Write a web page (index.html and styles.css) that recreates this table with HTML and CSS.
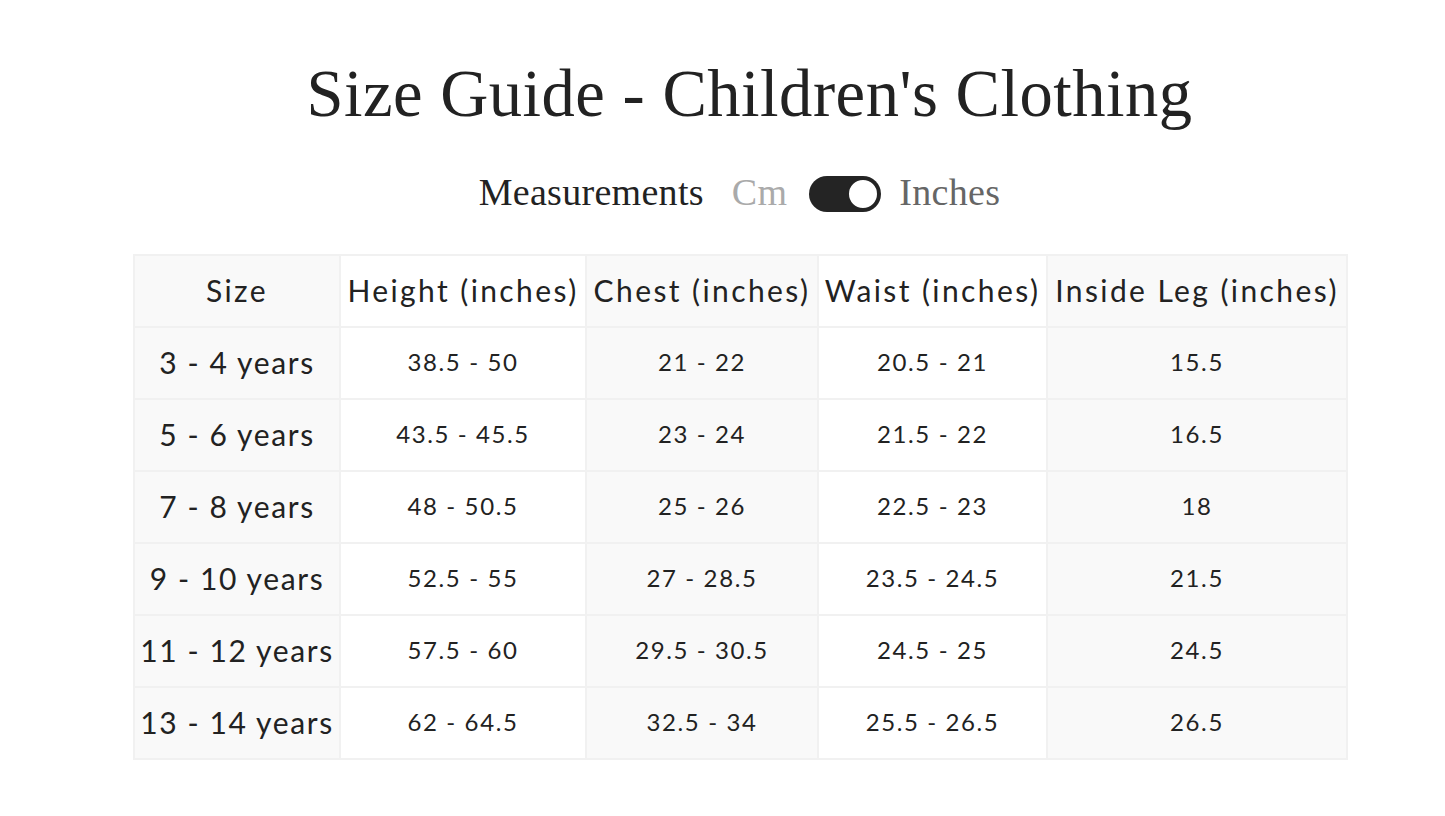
FILE: index.html
```html
<!DOCTYPE html>
<html lang="en">
<head>
<meta charset="utf-8">
<title>Size Guide - Children's Clothing</title>
<link rel="stylesheet" href="styles.css">
</head>
<body>
<main class="page">
  <h1 class="title">Size Guide - Children's Clothing</h1>
  <div class="units">
    <span class="units-label">Measurements</span>
    <span class="unit unit-off">Cm</span>
    <span class="toggle" role="switch" aria-checked="true"><span class="knob"></span></span>
    <span class="unit unit-on">Inches</span>
  </div>
  <table class="sizes">
    <colgroup>
      <col class="c1"><col class="c2"><col class="c3"><col class="c4"><col class="c5">
    </colgroup>
    <thead>
      <tr>
        <th>Size</th>
        <th>Height (inches)</th>
        <th>Chest (inches)</th>
        <th>Waist (inches)</th>
        <th>Inside Leg (inches)</th>
      </tr>
    </thead>
    <tbody>
      <tr><th>3 - 4 years</th><td>38.5 - 50</td><td>21 - 22</td><td>20.5 - 21</td><td>15.5</td></tr>
      <tr><th>5 - 6 years</th><td>43.5 - 45.5</td><td>23 - 24</td><td>21.5 - 22</td><td>16.5</td></tr>
      <tr><th>7 - 8 years</th><td>48 - 50.5</td><td>25 - 26</td><td>22.5 - 23</td><td>18</td></tr>
      <tr><th>9 - 10 years</th><td>52.5 - 55</td><td>27 - 28.5</td><td>23.5 - 24.5</td><td>21.5</td></tr>
      <tr><th>11 - 12 years</th><td>57.5 - 60</td><td>29.5 - 30.5</td><td>24.5 - 25</td><td>24.5</td></tr>
      <tr><th>13 - 14 years</th><td>62 - 64.5</td><td>32.5 - 34</td><td>25.5 - 26.5</td><td>26.5</td></tr>
    </tbody>
  </table>
  <p class="note">All measurements are approximate and taken from the garment laid flat. If your child is between sizes, we recommend sizing up.</p>
</main>
</body>
</html>
```

FILE: styles.css
```css
html, body {
  margin: 0;
  padding: 0;
  background: #ffffff;
}

.page {
  padding: 0 99px 0 133px;
  display: flex;
  flex-direction: column;
  align-items: stretch;
}

.title {
  margin: 52px 0 0;
  padding-left: 20px;
  font-family: "Liberation Serif", "Times New Roman", serif;
  font-weight: 400;
  font-size: 66.6px;
  line-height: 84px;
  text-align: center;
  color: #222222;
  letter-spacing: 0.5px;
}

.units {
  display: flex;
  justify-content: center;
  align-items: center;
  margin-top: 36px;
  height: 40px;
  font-family: "Liberation Serif", "Times New Roman", serif;
  font-size: 38px;
  letter-spacing: 0.3px;
}

.units-label {
  color: #222222;
  margin-right: 28px;
}

.unit-off {
  color: #aaaaaa;
  margin-right: 22px;
}

.unit-on {
  color: #666666;
  margin-left: 18px;
}

.toggle {
  display: flex;
  align-items: center;
  justify-content: flex-end;
  width: 72px;
  height: 36px;
  border-radius: 18px;
  background: #242424;
  box-sizing: border-box;
  padding: 0 2px;
  margin-top: 4px;
}

.knob {
  width: 32px;
  height: 32px;
  border-radius: 50%;
  background: #ffffff;
  box-sizing: border-box;
  border: 2px solid #242424;
}

.sizes {
  margin-top: 42px;
  border-collapse: collapse;
  font-family: "Lato", "Liberation Sans", sans-serif;
  color: #222222;
  table-layout: fixed;
  width: 1213px;
}

.sizes th,
.sizes td {
  border: 2px solid #f1f1f1;
  height: 67px;
  padding: 0 0 3px;
  text-align: center;
  vertical-align: middle;
  font-weight: 400;
  white-space: nowrap;
}

.sizes th {
  font-size: 30px;
  letter-spacing: 1.6px;
}

.sizes thead th {
  letter-spacing: 2.4px;
}

.sizes td {
  font-size: 24px;
  letter-spacing: 1.6px;
}

.sizes tr > :nth-child(odd) {
  background: #f9f9f9;
}

.sizes tr > :nth-child(even) {
  background: #ffffff;
}

.c1 { width: 206px; }
.c2 { width: 246px; }
.c3 { width: 232px; }
.c4 { width: 229px; }
.c5 { width: 300px; }

.note {
  margin: 46px 0 0;
  font-family: "Lato", "Liberation Sans", sans-serif;
  font-size: 24px;
  line-height: 36px;
  letter-spacing: 1.5px;
  color: #444444;
}
```
